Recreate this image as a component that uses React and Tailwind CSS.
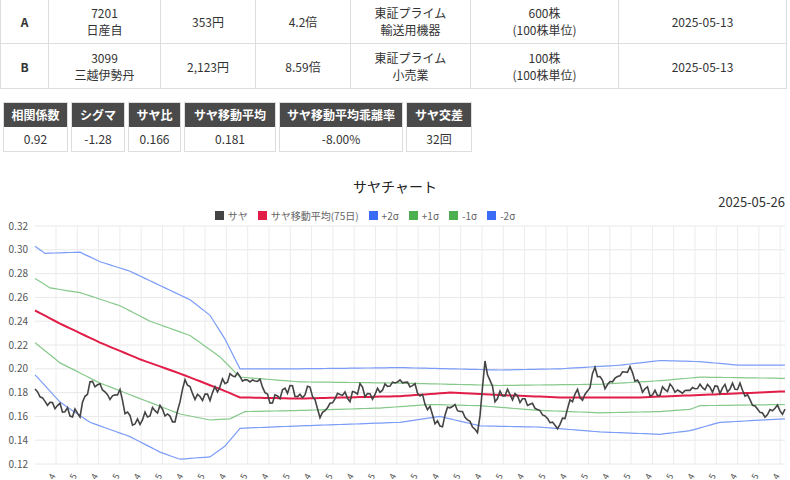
import React from 'react';

const font = { fontFamily: '"Noto Sans CJK JP", "Noto Sans", sans-serif' };

const rows = [
  ['A', ['7201', '日産自'], '353円', '4.2倍', ['東証プライム', '輸送用機器'], ['600株', '(100株単位)'], '2025-05-13'],
  ['B', ['3099', '三越伊勢丹'], '2,123円', '8.59倍', ['東証プライム', '小売業'], ['100株', '(100株単位)'], '2025-05-13'],
];
const colW = ['w-[48px]', 'w-[112px]', 'w-[95px]', 'w-[95px]', 'w-[120px]', 'w-[148px]', 'flex-1'];

const stats = [
  ['相関係数', '0.92', 'w-[65px]'],
  ['シグマ', '-1.28', 'w-[54px]'],
  ['サヤ比', '0.166', 'w-[53px]'],
  ['サヤ移動平均', '0.181', 'w-[92px]'],
  ['サヤ移動平均乖離率', '-8.00%', 'w-[124px]'],
  ['サヤ交差', '32回', 'w-[66px]'],
];

const X0 = 35, X1 = 785, Y0 = 57, H = 238;
const yOf = v => Y0 + ((0.32 - v) / 0.2) * H;

function interp(pts, x) {
  for (let i = 0; i < pts.length - 1; i++) {
    const [xa, va] = pts[i], [xb, vb] = pts[i + 1];
    if (x >= xa && x <= xb) return va + (vb - va) * ((x - xa) / (xb - xa));
  }
  return pts[pts.length - 1][1];
}
function path(pts, jitter = 0) {
  let d = '';
  for (let x = X0; x <= X1; x += jitter ? 2.5 : 5) {
    const n = jitter ? (Math.sin(x * 1.7) * 0.6 + Math.sin(x * 4.3) * 0.4) * jitter : 0;
    d += (d ? 'L' : 'M') + x.toFixed(1) + ',' + yOf(interp(pts, x) + n).toFixed(1);
  }
  return d;
}

const up2 = [[35,.303],[45,.297],[80,.298],[100,.290],[130,.282],[160,.270],[190,.258],[210,.245],[225,.225],[240,.200],[300,.200],[400,.201],[500,.199],[560,.200],[620,.203],[660,.207],[700,.206],[740,.203],[785,.203]];
const up1 = [[35,.276],[50,.268],[80,.264],[120,.253],[150,.240],[190,.228],[220,.210],[240,.193],[300,.189],[400,.188],[500,.186],[600,.187],[660,.190],[700,.193],[785,.192]];
const ma = [[35,.249],[60,.238],[100,.222],[140,.208],[180,.196],[220,.183],[240,.176],[300,.175],[400,.177],[450,.180],[500,.178],[560,.176],[640,.176],[700,.178],[785,.181]];
const dn1 = [[35,.222],[60,.205],[100,.188],[140,.175],[180,.162],[210,.157],[230,.158],[245,.164],[300,.165],[380,.167],[430,.170],[480,.169],[540,.165],[600,.163],[660,.164],[690,.166],[700,.169],[785,.170]];
const dn2 = [[35,.195],[60,.172],[90,.155],[130,.143],[160,.130],[180,.124],[210,.126],[225,.135],[240,.150],[300,.152],[400,.155],[440,.160],[480,.152],[540,.151],[600,.147],[660,.145],[690,.148],[720,.155],[785,.158]];
const saya = [[35,.183],[45,.172],[60,.168],[70,.162],[80,.163],[90,.188],[100,.186],[110,.175],[120,.181],[125,.165],[135,.153],[150,.163],[160,.167],[175,.155],[185,.191],[195,.176],[210,.177],[220,.186],[235,.196],[245,.190],[260,.190],[270,.172],[290,.185],[300,.175],[310,.185],[320,.160],[330,.170],[340,.180],[350,.175],[360,.185],[370,.176],[385,.185],[400,.190],[415,.185],[430,.165],[440,.150],[450,.170],[460,.165],[470,.155],[478,.145],[485,.205],[495,.175],[505,.180],[520,.175],[535,.168],[545,.160],[555,.152],[560,.152],[575,.180],[585,.175],[595,.200],[605,.185],[620,.195],[630,.200],[640,.185],[655,.178],[670,.185],[680,.180],[700,.185],[720,.183],[740,.185],[755,.168],[765,.160],[775,.168],[785,.163]];

const legend = [['#444', 'サヤ'], ['#e11d48', 'サヤ移動平均(75日)'], ['#3b6cf6', '+2σ'], ['#4caf50', '+1σ'], ['#4caf50', '-1σ'], ['#3b6cf6', '-2σ']];

function Chart() {
  const ticks = [];
  for (let i = 0; i <= 10; i++) ticks.push(0.32 - i * 0.02);
  const vx = [];
  for (let x = X0 + 21; x < X1; x += 21.3) vx.push(x);
  return (
    <svg width="790" height="310" className="block">
      {ticks.map(t => (
        <g key={t}>
          <line x1={X0} x2={X1} y1={yOf(t)} y2={yOf(t)} stroke="#e8e8e8" />
          <text x={28} y={yOf(t) + 3.5} fontSize="10" fill="#555" textAnchor="end" style={font}>{t.toFixed(2)}</text>
        </g>
      ))}
      {vx.map(x => <line key={x} x1={x} x2={x} y1={Y0} y2={Y0 + H} stroke="#ececec" />)}
      {vx.map((x, i) => (
        <text key={'l' + x} x={x} y={Y0 + H + 12} fontSize="9" fill="#555" transform={`rotate(-60 ${x} ${Y0 + H + 12})`} textAnchor="end" style={font}>{i % 2 ? '5' : '4'}</text>
      ))}
      <path d={path(up2)} fill="none" stroke="#7b9cf8" strokeWidth="1.2" />
      <path d={path(up1)} fill="none" stroke="#86c98a" strokeWidth="1.2" />
      <path d={path(dn1)} fill="none" stroke="#86c98a" strokeWidth="1.2" />
      <path d={path(dn2)} fill="none" stroke="#7b9cf8" strokeWidth="1.2" />
      <path d={path(ma)} fill="none" stroke="#e11d48" strokeWidth="2" />
      <path d={path(saya, 0.004)} fill="none" stroke="#444" strokeWidth="1.6" />
    </svg>
  );
}

export default function App() {
  return (
    <div className="w-[790px] h-[480px] overflow-hidden bg-white text-[#333]" style={font}>
      <div className="border-l border-t border-[#ddd] mt-[-2px] w-[787px]">
        {rows.map(r => (
          <div key={r[0]} className="flex h-[45px] border-b border-[#ddd] text-[12px]">
            {r.map((c, i) => (
              <div key={i} className={`${colW[i]} border-r border-[#ddd] flex flex-col items-center justify-center leading-[17px] ${i === 0 ? 'font-bold' : ''}`}>
                {Array.isArray(c) ? c.map(s => <span key={s}>{s}</span>) : c}
              </div>
            ))}
          </div>
        ))}
      </div>
      <div className="flex gap-[3px] mt-[13px] ml-[3px]">
        {stats.map(([h, v, w]) => (
          <div key={h} className={`${w} border border-[#ddd] text-center text-[12px]`}>
            <div className="bg-[#4a4a4a] text-white font-bold h-[24px] leading-[24px]">{h}</div>
            <div className="h-[24px] leading-[24px]">{v}</div>
          </div>
        ))}
      </div>
      <div className="mt-[24px] text-center text-[14px] text-[#222] h-[20px] leading-[20px]">サヤチャート</div>
      <div className="flex justify-end pr-[5px] text-[13px] text-[#333] h-[12px] leading-[12px]">2025-05-26</div>
      <div className="flex justify-center items-center gap-[10px] text-[10px] text-[#666] h-[14px] ml-[-60px]">
        {legend.map(([c, l]) => (
          <span key={l} className="flex items-center gap-[4px]">
            <span className="w-[9px] h-[9px] inline-block" style={{ background: c }} />{l}
          </span>
        ))}
      </div>
      <div className="mt-[-53px]"><Chart /></div>
    </div>
  );
}
